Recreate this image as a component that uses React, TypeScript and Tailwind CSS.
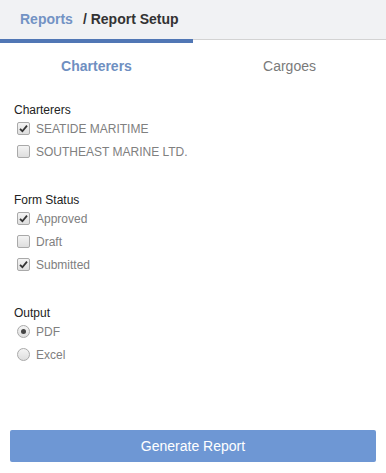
import React from 'react';

function Check({ checked }: { checked: boolean }) {
  return (
    <span className="w-[13px] h-[13px] rounded-[2px] border border-[#a9a9a9] bg-gradient-to-b from-[#f4f4f4] to-[#dedede] flex items-center justify-center">
      {checked && (
        <svg width="9" height="9" viewBox="0 0 9 9">
          <path d="M1 4.8 L3.4 7.2 L8 1.6" fill="none" stroke="#333" strokeWidth="1.8" />
        </svg>
      )}
    </span>
  );
}

function Radio({ checked }: { checked: boolean }) {
  return (
    <span className="w-[13px] h-[13px] rounded-full border border-[#a9a9a9] bg-gradient-to-b from-[#f4f4f4] to-[#dedede] flex items-center justify-center">
      {checked && <span className="w-[5px] h-[5px] rounded-full bg-[#444]" />}
    </span>
  );
}

function Section({ title, items, radio }: { title: string; items: [string, boolean][]; radio?: boolean }) {
  return (
    <div>
      <div className="h-[13px] leading-[13px] text-[12px] text-[#222]">{title}</div>
      {items.map(([label, on]) => (
        <div key={label} className="h-[23px] flex items-center gap-[6px] pl-[3px]">
          {radio ? <Radio checked={on} /> : <Check checked={on} />}
          <span className="text-[12px] text-[#808080]">{label}</span>
        </div>
      ))}
    </div>
  );
}

export default function App() {
  return (
    <div className="w-[386px] h-[473px] bg-white flex flex-col font-['Liberation_Sans',Arial,sans-serif]">
      {/* Header */}
      <div className="h-[40px] bg-[#f1f2f4] border-b border-[#d3d3d3] flex items-center pl-[20px] text-[14px] font-bold">
        <span className="text-[#7393c4]">Reports</span>
        <span className="text-[#333] ml-[10px]">/ Report Setup</span>
      </div>

      {/* Tabs */}
      <div className="flex h-[50px] -mt-px">
        <div className="w-[193px] border-t-4 border-[#5177b5] flex items-center justify-center text-[14px] font-bold text-[#6f8fc1]">
          Charterers
        </div>
        <div className="flex-1 pt-[4px] flex items-center justify-center text-[14px] text-[#7a7a7a]">
          Cargoes
        </div>
      </div>

      {/* Options */}
      <div className="pl-[14px] pt-[15px] flex flex-col gap-[31px]">
        <Section title="Charterers" items={[['SEATIDE MARITIME', true], ['SOUTHEAST MARINE LTD.', false]]} />
        <Section title="Form Status" items={[['Approved', true], ['Draft', false], ['Submitted', true]]} />
        <Section title="Output" radio items={[['PDF', true], ['Excel', false]]} />
      </div>

      <div className="flex-1" />
      <div className="px-[10px] pb-[11px]">
        <button className="w-full h-[32px] rounded-[2px] bg-[#6e97d4] text-white text-[14px]">
          Generate Report
        </button>
      </div>
    </div>
  );
}
